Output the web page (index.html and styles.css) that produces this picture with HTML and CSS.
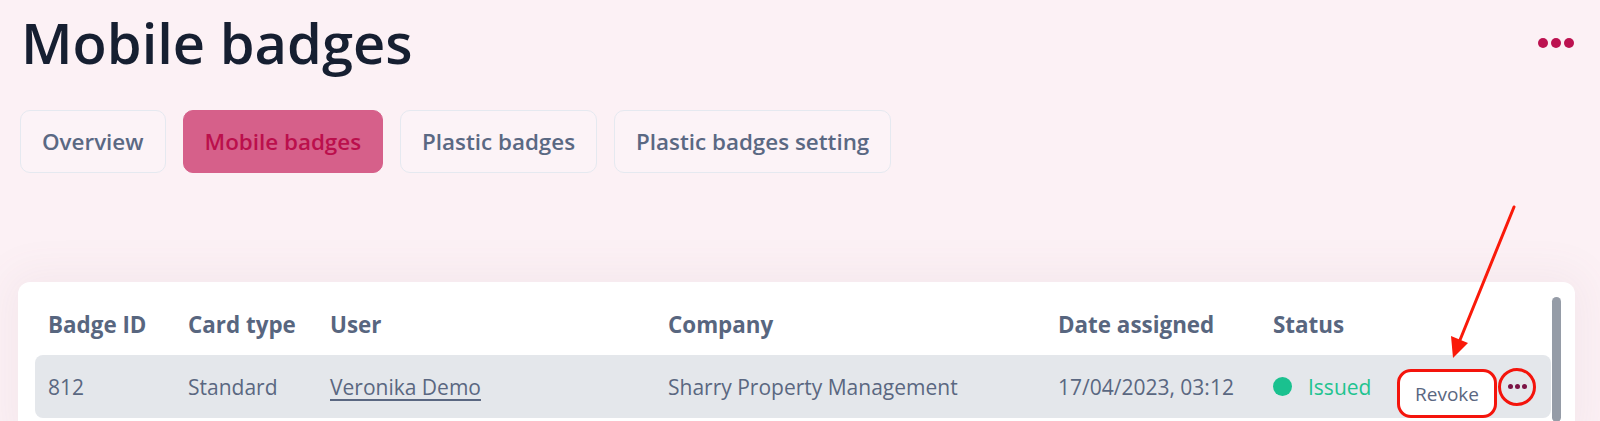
FILE: index.html
```html
<!DOCTYPE html>
<html lang="en">
<head>
<meta charset="utf-8">
<title>Mobile badges</title>
<link rel="stylesheet" href="styles.css">
</head>
<body>
<div class="page">
  <header class="top">
    <h1 class="title">Mobile badges</h1>
    <button class="more" aria-label="More"><span></span><span></span><span></span></button>
  </header>
  <nav class="tabs">
    <a class="tab">Overview</a>
    <a class="tab active">Mobile badges</a>
    <a class="tab">Plastic badges</a>
    <a class="tab">Plastic badges setting</a>
  </nav>
  <section class="card">
    <div class="table">
      <div class="grid head">
        <div>Badge ID</div>
        <div>Card type</div>
        <div>User</div>
        <div>Company</div>
        <div>Date assigned</div>
        <div>Status</div>
        <div></div>
      </div>
      <div class="grid row">
        <div>812</div>
        <div>Standard</div>
        <div><a class="link">Veronika Demo</a></div>
        <div>Sharry Property Management</div>
        <div>17/04/2023, 03:12</div>
        <div class="status"><span class="dot"></span>Issued</div>
        <div class="actions">
          <button class="revoke">Revoke</button>
          <button class="row-more" aria-label="More"><span></span><span></span><span></span></button>
        </div>
      </div>
    </div>
    <div class="scrollbar"></div>
  </section>
</div>
<svg class="annot" width="1600" height="421" viewBox="0 0 1600 421">
  <line x1="1514" y1="207" x2="1460" y2="340" stroke="#fa1a0a" stroke-width="3" stroke-linecap="round"/>
  <polygon points="1453,358 1451,336 1468,343" fill="#fa1a0a"/>
</svg>
</body>
</html>
```
FILE: styles.css
```css
* { box-sizing: border-box; }
html, body { margin: 0; padding: 0; }
body {
  width: 1600px;
  height: 421px;
  overflow: hidden;
  background: #fcf1f5;
  font-family: "Open Sans", "DejaVu Sans", sans-serif;
  position: relative;
}
.page { width: 1600px; }
.top {
  display: flex;
  justify-content: space-between;
  align-items: flex-start;
  padding: 14px 26px 0 21px;
}
.title {
  margin: 0;
  font-size: 56px;
  line-height: 56px;
  font-weight: 600;
  color: #161f31;
}
.more {
  display: flex;
  gap: 3px;
  margin-top: 24px;
  padding: 0;
  border: 0;
  background: none;
}
.more span {
  width: 10px;
  height: 10px;
  border-radius: 50%;
  background: #bc1250;
}
.tabs {
  display: flex;
  gap: 17px;
  padding-left: 20px;
  margin-top: 40px;
}
.tab {
  display: flex;
  align-items: center;
  height: 63px;
  padding: 0 21px;
  border: 1.5px solid #e5e9f0;
  border-radius: 10px;
  background: #fcf3f7;
  font-size: 22.4px;
  font-weight: 600;
  color: #5a6883;
}
.tab.active {
  background: #d6608a;
  border-color: #d6608a;
  color: #bb0f4c;
}
.card {
  display: flex;
  margin: 109px 25px 0 18px;
  padding: 30px 14px 20px 17px;
  background: #fff;
  border-radius: 12px;
  box-shadow: 0 0 40px 12px rgba(140, 100, 115, 0.06);
  height: 160px;
}
.table { flex: 1; }
.scrollbar {
  width: 9px;
  margin-left: 1px;
  margin-top: -15px;
  border-radius: 5px;
  background: #959ca7;
}
.grid {
  display: grid;
  grid-template-columns: 140px 142px 338px 390px 215px 124px 1fr;
  padding-left: 13px;
}
.head {
  font-size: 22.4px;
  line-height: 26px;
  font-weight: 700;
  color: #58667f;
  margin-bottom: 17px;
}
.row {
  height: 63px;
  align-items: center;
  background: #e4e7eb;
  border-radius: 8px;
  font-size: 21px;
  line-height: 28px;
  color: #5a6781;
}
.link {
  text-decoration: underline;
  text-underline-offset: 4px;
  text-decoration-thickness: 1.5px;
}
.status {
  display: flex;
  align-items: center;
  gap: 16px;
  color: #1fc390;
}
.dot {
  width: 19px;
  height: 19px;
  border-radius: 50%;
  background: #1ac18f;
}
.actions {
  display: flex;
  align-items: center;
  gap: 1px;
}
.revoke {
  width: 100px;
  height: 49px;
  margin-top: 14px;
  border: 3px solid #f4140c;
  border-radius: 14px;
  background: #fff;
  font-family: "Open Sans", "DejaVu Sans", sans-serif;
  font-size: 19px;
  color: #5a6781;
  padding: 0;
}
.row-more {
  display: flex;
  align-items: center;
  justify-content: center;
  gap: 2px;
  width: 38px;
  height: 38px;
  border: 3px solid #f4140c;
  border-radius: 50%;
  background: transparent;
  padding: 0;
}
.row-more span {
  width: 5px;
  height: 5px;
  border-radius: 50%;
  background: #7b1446;
}
.annot {
  position: absolute;
  top: 0;
  left: 0;
  pointer-events: none;
}
```
